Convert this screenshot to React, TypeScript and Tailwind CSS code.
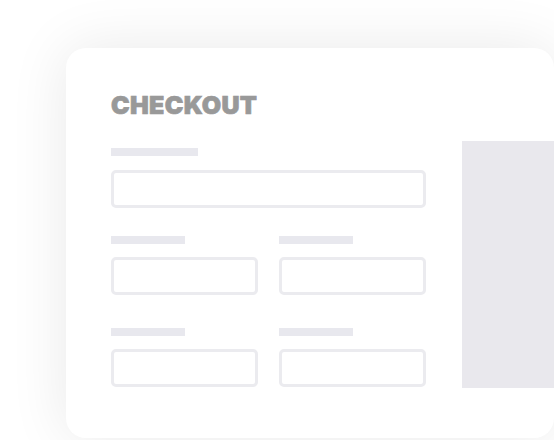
export default function App() {
  return (
    <div className="w-[554px] h-[440px] overflow-hidden bg-white">
      <div className="ml-[66px] mt-[48px] flex h-[390px] w-[488px] overflow-hidden rounded-[20px] bg-white shadow-[0_0_60px_rgba(0,0,0,0.09)]">
        <div className="w-[396px] shrink-0 pl-[45px] pt-[45px]">
          <h1 className="font-['Inter',sans-serif] text-[25px] font-black leading-[25px] tracking-[0.3px] text-[#999999] [-webkit-text-stroke:0.7px_#999999]">
            CHECKOUT
          </h1>
          <div className="mt-[30px] w-[315px]">
            <div className="h-[8px] w-[87px] bg-[#e8e8ee]" />
            <div className="mt-[14px] h-[38px] rounded-[5px] border-[3px] border-[#ebebef]" />
          </div>
          <div className="mt-[28px] flex w-[315px] gap-[21px]">
            <Field />
            <Field />
          </div>
          <div className="mt-[33px] flex w-[315px] gap-[21px]">
            <Field />
            <Field />
          </div>
        </div>
        <div className="mt-[93px] h-[247px] w-[92px] bg-[#e9e8ed]" />
      </div>
    </div>
  );
}

function Field() {
  return (
    <div className="w-[147px]">
      <div className="h-[8px] w-[74px] bg-[#e8e8ee]" />
      <div className="mt-[13px] h-[38px] rounded-[5px] border-[3px] border-[#ebebef]" />
    </div>
  );
}
